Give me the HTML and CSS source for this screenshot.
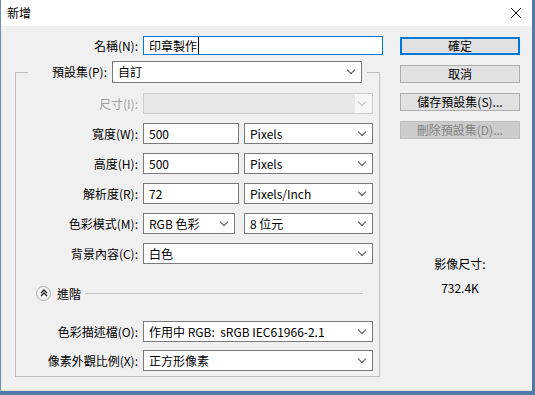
FILE: index.html
```html
<!DOCTYPE html>
<html lang="zh-Hant">
<head>
  <meta charset="UTF-8" />
  <title>新增</title>
  <link rel="stylesheet" href="styles.css">
</head>
<body>

  <div class="dialog">
    <div class="titlebar">
      <span class="title">新增</span>
      <svg class="close" width="12" height="12" viewBox="0 0 12 12">
        <path d="M1 1 L11 11 M11 1 L1 11" stroke="#000" stroke-width="1" fill="none"/>
      </svg>
    </div>

    <div class="main">
      <!-- 左側欄位 -->
      <div class="left">
        <div class="name-row">
          <label class="lbl">名稱(N):</label>
          <div class="textbox focused"><span class="caret">印章製作</span></div>
        </div>

        <div class="group">
          <div class="preset">
            <label class="lbl">預設集(P):</label>
            <div class="select"><span>自訂</span><i class="chev"></i></div>
          </div>

          <div class="rows">
            <label class="lbl disabled">尺寸(I):</label>
            <div class="select off"><span></span><i class="chev"></i></div>

            <label class="lbl">寬度(W):</label>
            <div class="pair">
              <div class="textbox num">500</div>
              <div class="select unit"><span>Pixels</span><i class="chev"></i></div>
            </div>

            <label class="lbl">高度(H):</label>
            <div class="pair">
              <div class="textbox num">500</div>
              <div class="select unit"><span>Pixels</span><i class="chev"></i></div>
            </div>

            <label class="lbl">解析度(R):</label>
            <div class="pair">
              <div class="textbox num">72</div>
              <div class="select unit"><span>Pixels/Inch</span><i class="chev"></i></div>
            </div>

            <label class="lbl">色彩模式(M):</label>
            <div class="pair">
              <div class="select mode"><span>RGB 色彩</span><i class="chev"></i></div>
              <div class="select unit"><span>8 位元</span><i class="chev"></i></div>
            </div>

            <label class="lbl">背景內容(C):</label>
            <div class="select"><span>白色</span><i class="chev"></i></div>
          </div>

          <div class="advanced">
            <span class="toggle">
              <svg width="8" height="8" viewBox="0 0 8 8">
                <path d="M1 4 L4 1 L7 4 M1 7 L4 4 L7 7" stroke="#222" stroke-width="1.3" fill="none"/>
              </svg>
            </span>
            <span class="adv-text">進階</span>
            <span class="rule"></span>
          </div>

          <div class="rows lower">
            <label class="lbl">色彩描述檔(O):</label>
            <div class="select"><span>作用中 RGB:&nbsp; sRGB IEC61966-2.1</span><i class="chev"></i></div>

            <label class="lbl">像素外觀比例(X):</label>
            <div class="select"><span>正方形像素</span><i class="chev"></i></div>
          </div>
        </div>
      </div>

      <!-- 右側按鈕 -->
      <div class="right">
        <button class="btn default">確定</button>
        <button class="btn">取消</button>
        <button class="btn">儲存預設集(S)...</button>
        <button class="btn" disabled>刪除預設集(D)...</button>

        <div class="size-info">
          <p>影像尺寸:</p>
          <p>732.4K</p>
        </div>
      </div>
    </div>
  </div>

</body>
</html>
```

FILE: styles.css
```css
* {
  box-sizing: border-box;
}
body {
  margin: 0;
  background-color: #4f7ba6;
  font-family: "Noto Sans CJK TC", "Noto Sans", sans-serif;
  font-size: 12px;
  color: #000;
}
.dialog {
  width: 532px;
  height: 391px;
  background-color: #f0f0f0;
  border-left: 1px solid #6b8fb5;
  border-bottom: 1px solid #d9d9d9;
}
.titlebar {
  height: 26px;
  background: #fff;
  display: flex;
  align-items: center;
  justify-content: space-between;
  padding: 0 10px 0 6px;
}
.title {
  line-height: 26px;
}
.main {
  display: flex;
  padding-top: 10px;
}
.left {
  width: 399px;
  flex: none;
  padding-left: 14px;
}
.lbl {
  text-align: right;
  line-height: 20px;
  white-space: nowrap;
}
.lbl.disabled {
  color: #a0a0a0;
}
.name-row {
  display: grid;
  grid-template-columns: 123px 240px;
  column-gap: 5px;
}
.textbox {
  height: 19px;
  background: #fff;
  border: 1px solid #7a7a7a;
  padding: 0 5px;
  line-height: 17px;
}
.textbox.focused {
  border-color: #0078d7;
}
.caret {
  border-right: 1px solid #000;
  padding-right: 1px;
}

/* 群組框 */
.group {
  width: 365px;
  margin-top: 16px;
  padding-bottom: 5px;
  border: 1px solid #bfbfbf;
}
.preset {
  display: flex;
  gap: 5px;
  width: 339px;
  margin: -12px 0 0 12px;
  padding-right: 5px;
  background: #f0f0f0;
}
.preset .lbl {
  width: 79px;
  line-height: 22px;
}
.preset .select {
  width: 250px;
  height: 22px;
  line-height: 20px;
}

.rows {
  display: grid;
  grid-template-columns: 122px 230px;
  column-gap: 5px;
  row-gap: 9px;
  margin-top: 10px;
}
.rows > * {
  height: 21px;
}
.rows .lbl {
  line-height: 21px;
}
.pair {
  display: flex;
  gap: 5px;
}
.select {
  position: relative;
  height: 21px;
  background: #fff;
  border: 1px solid #7a7a7a;
  padding: 0 5px;
  line-height: 19px;
  white-space: nowrap;
}
.select.off {
  background: #e7e7e7;
  border-color: #cccccc;
}
.select.off::after {
  content: '';
  position: absolute;
  top: 0;
  right: 0;
  width: 17px;
  height: 100%;
  background: #f7f7f7;
}
.textbox.num {
  width: 96px;
  height: 21px;
  line-height: 19px;
}
.select.unit {
  flex: 1;
}
.select.mode {
  width: 92px;
  margin-right: 4px;
}
.chev {
  position: absolute;
  right: 7px;
  top: 5px;
  width: 6px;
  height: 6px;
  border-right: 1px solid #505050;
  border-bottom: 1px solid #505050;
  transform: rotate(45deg);
  z-index: 1;
}
.select.off .chev {
  border-color: #c0c0c0;
}

.advanced {
  display: flex;
  align-items: center;
  margin: 22px 0 0 20px;
  height: 14px;
}
.toggle {
  width: 15px;
  height: 15px;
  border: 1px solid #adadad;
  border-radius: 50%;
  background: #f4f4f4;
  display: flex;
  align-items: center;
  justify-content: center;
}
.adv-text {
  margin-left: 6px;
}
.rule {
  flex: 1;
  height: 1px;
  background: #c8c8c8;
  margin: 0 16px 0 4px;
}
.rows.lower {
  margin-top: 21px;
  row-gap: 8px;
}

.right {
  width: 120px;
  flex: none;
  display: flex;
  flex-direction: column;
  gap: 10px;
}
.btn {
  height: 18px;
  padding: 0;
  font-family: inherit;
  font-size: 12px;
  color: #000;
  background: #e1e1e1;
  border: 1px solid #adadad;
  line-height: 16px;
}
.btn.default {
  border: 2px solid #0078d7;
  margin-top: 1px;
  line-height: 14px;
}
.btn:disabled {
  color: #838383;
  background: #cccccc;
  border-color: #bfbfbf;
}
.size-info {
  margin-top: 106px;
  text-align: center;
}
.size-info p {
  margin: 0 0 6px;
  line-height: 18px;
}
```
